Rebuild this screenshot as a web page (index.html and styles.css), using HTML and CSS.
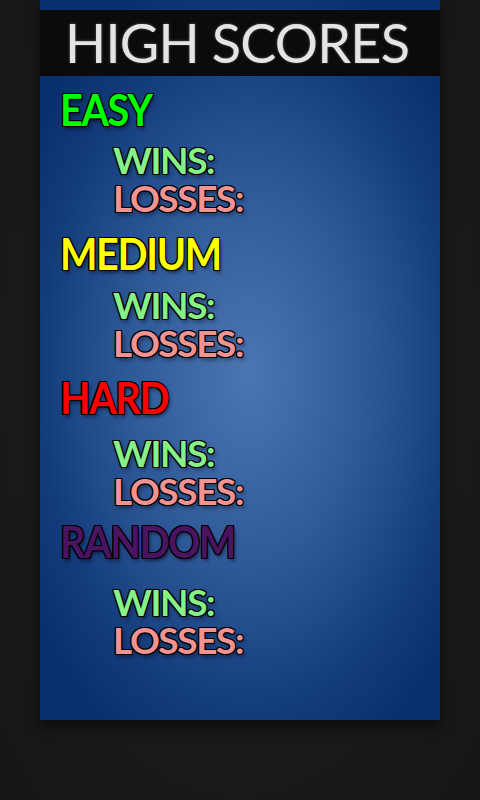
FILE: index.html
```html
<!DOCTYPE html>
<html>
<head>
<meta charset="utf-8">
<link rel="stylesheet" href="styles.css">
</head>
<body>
<div class="screen">
  <div class="panel">
    <div class="header"><h1 class="title">HIGH SCORES</h1></div>
    <div class="content">
      <section class="mode mode-easy">
        <div class="mode-name"><span class="label easy">EASY</span></div>
        <div class="stats">
          <div class="wins">WINS:</div>
          <div class="losses">LOSSES:</div>
        </div>
      </section>
      <section class="mode mode-medium">
        <div class="mode-name"><span class="label medium">MEDIUM</span></div>
        <div class="stats">
          <div class="wins">WINS:</div>
          <div class="losses">LOSSES:</div>
        </div>
      </section>
      <section class="mode mode-hard">
        <div class="mode-name"><span class="label hard">HARD</span></div>
        <div class="stats">
          <div class="wins">WINS:</div>
          <div class="losses">LOSSES:</div>
        </div>
      </section>
      <section class="mode mode-random">
        <div class="mode-name"><span class="label random">RANDOM</span></div>
        <div class="stats">
          <div class="wins">WINS:</div>
          <div class="losses">LOSSES:</div>
        </div>
      </section>
    </div>
  </div>
</div>
</body>
</html>
```
FILE: styles.css
```css
html, body {
  margin: 0;
  padding: 0;
  height: 100%;
}
body {
  background: radial-gradient(ellipse at 50% 45%, #1e1e1e 0%, #1a1a1a 60%, #161616 100%);
  font-family: Lato, "Open Sans", sans-serif;
}
.screen {
  width: 480px;
  height: 800px;
  padding-left: 40px;
  box-sizing: border-box;
}
.panel {
  width: 400px;
  height: 720px;
  background: radial-gradient(ellipse 260px 420px at 52% 52%, #4c76b2 0%, #2f5a9a 45%, #133c7c 80%, #0a2f6e 100%);
  box-shadow: 0 6px 12px rgba(0,0,0,0.6);
  padding-top: 10px;
  box-sizing: border-box;
}
.header {
  height: 66px;
  background: #0b0b0b;
  display: flex;
  align-items: center;
  padding-left: 25px;
}
.title {
  margin: 0;
  font-family: Lato, sans-serif;
  font-weight: 400;
  font-size: 54px;
  line-height: 1;
  color: #e4e4e4;
  letter-spacing: -0.8px;
  text-shadow: 0 0 3px rgba(255,255,255,0.35), 0 2px 2px rgba(0,0,0,0.8);
}
.content {
  padding-top: 7px;
}
.mode {
  height: 144px;
}
.mode-name {
  padding-left: 20px;
  height: 52px;
}
.label {
  display: inline-block;
  transform: scaleX(0.9);
  transform-origin: left center;
  font-weight: 700;
  font-size: 44px;
  line-height: 52px;
  letter-spacing: -1.5px;
  text-shadow: 1px 0 0 #000, -1px 0 0 #000, 0 1px 0 #000, 0 -1px 0 #000,
    1px 1px 0 #000, -1px -1px 0 #000, 1px -1px 0 #000, -1px 1px 0 #000,
    2px 3px 4px rgba(0,0,0,0.5);
}
.easy { color: #00ff00; }
.medium { color: #ffff00; }
.hard { color: #ff0000; }
.random { color: #4a1460; }
.stats {
  padding-left: 73px;
  padding-top: 7px;
  font-weight: 700;
  font-size: 37px;
  line-height: 38px;
  letter-spacing: -1.4px;
}
.mode-easy .stats { padding-top: 6px; }
.mode-hard .stats { padding-top: 11px; }
.mode-random .stats { padding-top: 16px; }
.wins, .losses {
  text-shadow: 1px 0 0 #000, -1px 0 0 #000, 0 1px 0 #000, 0 -1px 0 #000,
    1px 1px 0 #000, -1px -1px 0 #000, 1px -1px 0 #000, -1px 1px 0 #000,
    2px 3px 4px rgba(0,0,0,0.45);
}
.wins { color: #88f088; }
.losses { color: #f29393; }
```
